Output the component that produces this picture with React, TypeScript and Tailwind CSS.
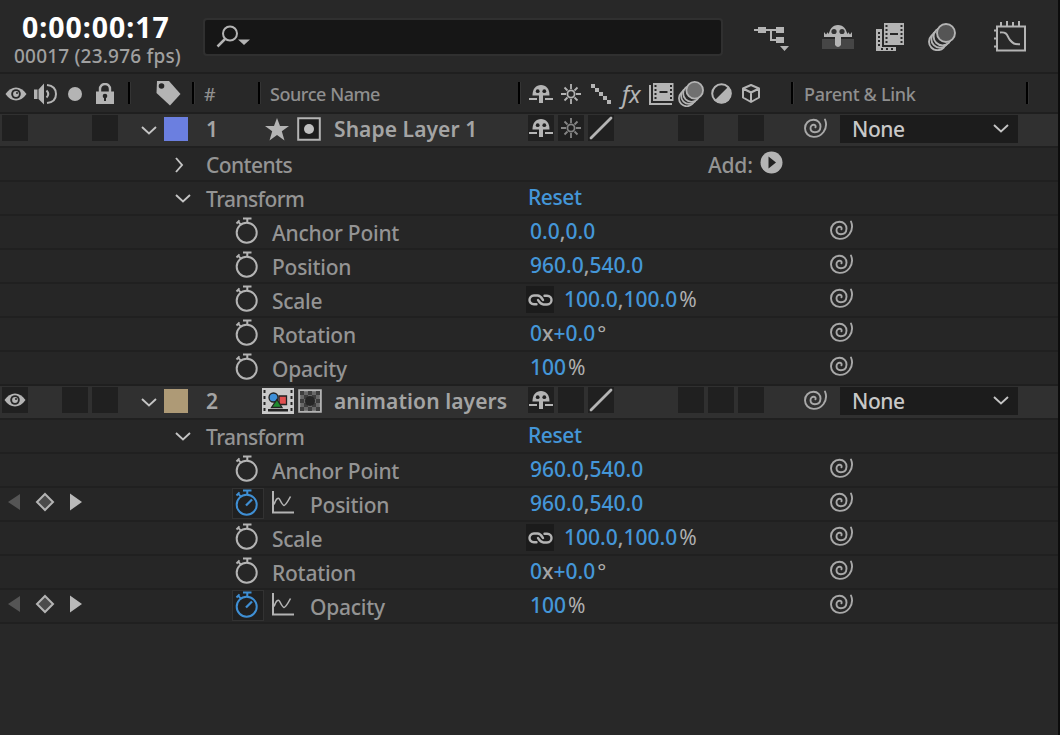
import type { ReactNode } from "react";

const GREY = "#b4b4b4";

function Eye() {
  return (
    <svg width="22" height="14" viewBox="0 0 22 14">
      <path d="M.5 7Q5 .5 11 .5T21.500 7Q17 13.500 11 13.500T.5 7Z" fill={GREY} />
      <circle cx="11" cy="7" r="4.800" fill="#262626" />
      <circle cx="11" cy="7" r="2.900" fill={GREY} />
      <circle cx="12" cy="6" r="1" fill="#262626" />
    </svg>
  );
}

function Speaker() {
  return (
    <svg width="24" height="24" viewBox="0 0 24 24" fill="none" stroke={GREY} strokeWidth="2">
      <path d="M0 7.500h3.500V17H0zM4.500 7.500L10 1.500v21L4.500 17z" fill={GREY} stroke="none" />
      <path d="M12.500 8.500Q16 12 12.500 15.500M13 3q9 1 9 9t-9 9" />
    </svg>
  );
}

function Lock() {
  return (
    <svg width="18" height="21" viewBox="0 0 18 21">
      <path d="M4 9V6a5 5 0 0 1 10 0v3" fill="none" stroke={GREY} strokeWidth="2.400" />
      <path d="M0 8.500h18V21H0z" fill={GREY} />
      <circle cx="9" cy="13" r="2.300" fill="#262626" />
      <path d="M8 13h2v5H8z" fill="#262626" />
    </svg>
  );
}

function Tag() {
  return (
    <svg width="25" height="25" viewBox="0 0 25 25">
      <path d="M1 0h12l11.500 13-10.500 11.500L.5 12z" fill={GREY} />
      <circle cx="5.500" cy="5" r="2.800" fill="#262626" />
    </svg>
  );
}

function Shy() {
  return (
    <svg width="24" height="20" viewBox="0 0 24 20" fill={GREY}>
      <path d="M3.500 11.500C3.500 4.500 7 1 12 1s8.500 3.500 8.500 10.500z" />
      <path d="M10 10h4v9h-4z" />
      <path d="M0 14h8v2H0zM16 14h8v2h-8z" />
      <circle cx="8.700" cy="7.200" r="1.900" fill="#202020" />
      <circle cx="15.300" cy="7.200" r="1.900" fill="#202020" />
    </svg>
  );
}

function Sun({ color = GREY }: { color?: string }) {
  return (
    <svg width="20" height="20" viewBox="0 0 20 20" fill="none" stroke={color} strokeWidth="1.800">
      <circle cx="10" cy="10" r="3.600" />
      <path d="M10 0v5M10 15v5M0 10h5M15 10h5M3.500 3.500l3 3M13.500 13.500l3 3M3.500 16.500l3-3M13.500 6.500l3-3" />
    </svg>
  );
}

function Dashes() {
  return (
    <svg width="20" height="20" viewBox="0 0 20 20" fill={GREY}>
      <path d="M0 0h4v4H0zM4 4h4v4H4zM8 8h4v4H8zM12 12h4v4h-4zM16 16h4v4h-4z" />
    </svg>
  );
}

function FilmFrame() {
  return (
    <svg width="25" height="22" viewBox="0 0 25 22">
      <path d="M1 2v19h22" fill="none" stroke={GREY} strokeWidth="2" />
      <path d="M4 0h20.500v18H4z" fill={GREY} />
      <path d="M5.500 2h2v2h-2zM5.500 6h2v2h-2zM5.500 10h2v2h-2zM5.500 14h2v2h-2zM21 2h2v2h-2zM21 6h2v2h-2zM21 10h2v2h-2zM21 14h2v2h-2zM10.500 8h8v2h-8z" fill="#262626" />
    </svg>
  );
}

function MotionBlur({ size = 26, fill = "#707070" }: { size?: number; fill?: string }) {
  return (
    <svg width={size} height={size} viewBox="0 0 28 28" stroke={GREY} strokeWidth="1.900" fill="#282828">
      <circle cx="9.500" cy="18.700" r="8.500" />
      <circle cx="12" cy="16" r="8.700" />
      <circle cx="14.500" cy="13.500" r="8.900" />
      <circle cx="18" cy="10" r="9" fill={fill} />
    </svg>
  );
}

function Adjustment() {
  return (
    <svg width="21" height="21" viewBox="0 0 21 21">
      <circle cx="10.500" cy="10.500" r="9.300" fill="none" stroke={GREY} strokeWidth="2" />
      <path d="M17.500 3.500a9.900 9.900 0 0 1-14 14z" fill={GREY} />
    </svg>
  );
}

function Cube() {
  return (
    <svg width="18" height="19" viewBox="0 0 18 19" fill="none" stroke={GREY} strokeWidth="2" strokeLinejoin="round">
      <path d="M9 1l8 3.500v9L9 18l-8-4.500v-9zM1 4.500l8 4 8-4M9 8.500V18" />
    </svg>
  );
}

function Whip() {
  return (
    <svg width="25" height="21" viewBox="0 0 25 21" fill="none" stroke="#a8a8a8" strokeWidth="1.900" strokeLinecap="round">
      <path d="M22 1.500C23.500 5 23.300 10 20.500 14C17.500 18 13.500 19 10.500 18.900C5.500 18.600 2 15 2 10.300C2 5.500 5.500 1.800 10.500 1.800C14.800 1.800 17.700 5 17.500 8.800C17.300 12.500 14.800 14.300 11.800 14.300C9 14 7.500 12.200 7.500 10.200C7.500 8 9 6.600 11 6.800C12.500 7 12.800 8 12.500 9.300" />
    </svg>
  );
}

function Stopwatch({ active }: { active?: boolean }) {
  const color = active ? "#3f8fd4" : GREY;
  return (
    <svg width="24" height="28" viewBox="0 0 24 28" fill="none" stroke={color} strokeWidth="2">
      <circle cx="11.700" cy="16.700" r="10" />
      <path d="M8 2.500h8.500M12.300 3v4" />
      <path d="M1.500 7.500l3-3.200M2.500 5.200l3.500 3.500" strokeWidth="1.900" />
      {active && <path d="M11 17.500l6-6" strokeWidth="2.300" />}
    </svg>
  );
}

function GraphIcon() {
  return (
    <svg width="22" height="23" viewBox="0 0 22 23" fill="none" stroke={GREY}>
      <path d="M1 0v21.500h21" strokeWidth="2" />
      <path d="M2 13.500Q5.500 4 8 9t4 5.500Q14 14 18.500 5.500" strokeWidth="1.600" />
    </svg>
  );
}

function Chevron({ right }: { right?: boolean }) {
  return right ? (
    <svg width="9" height="16" viewBox="0 0 9 16" fill="none" stroke="#c4c4c4" strokeWidth="1.900">
      <path d="M1 1l6 7-6 7" />
    </svg>
  ) : (
    <svg width="16" height="9" viewBox="0 0 16 9" fill="none" stroke="#c4c4c4" strokeWidth="1.900">
      <path d="M1 1l7 6.500L15 1" />
    </svg>
  );
}

function Link() {
  return (
    <svg width="25" height="12" viewBox="0 0 25 12" fill="none" stroke={GREY} strokeWidth="2.400" strokeLinecap="round">
      <path d="M8.500 10.200H6C3 10.200 1.500 8 1.500 6S3 1.500 6 1.500H9.500C12.500 1.500 13.500 3.500 15 6" />
      <path d="M16.500 1.800H19C22 1.800 23.500 4 23.500 6S22 10.500 19 10.500H15.500C12.500 10.500 11.500 8.500 10 6" />
    </svg>
  );
}

function CompIcon() {
  return (
    <svg width="32" height="26" viewBox="0 0 32 26">
      <path d="M0 0h32v26H0z" fill="#c9c9c9" />
      <path d="M1.500 2h2v3h-2zM1.500 8h2v3h-2zM1.500 14h2v3h-2zM1.500 20h2v3h-2zM28.500 2h2v3h-2zM28.500 8h2v3h-2zM28.500 14h2v3h-2zM28.500 20h2v3h-2zM6 21h20v2.500H6z" fill="#222" />
      <path d="M17 8h7.500v8.500H17z" fill="#e05050" stroke="#222" strokeWidth="1.300" />
      <circle cx="11.500" cy="9.500" r="4.500" fill="#3d8fd8" stroke="#222" strokeWidth="1.300" />
      <path d="M15 11.500l5 8H9.500z" fill="#1e8a2e" stroke="#222" strokeWidth="1.300" />
    </svg>
  );
}

function MatteIcon({ checker }: { checker?: boolean }) {
  return (
    <svg width="24" height="24" viewBox="0 0 24 24">
      <path d="M1.200 1.200h21.600v21.600H1.200z" fill={checker ? "#686868" : "#1d1d1d"} stroke={GREY} strokeWidth="2" />
      {checker && <path d="M2 2h4v4H2zM10 2h4v4h-4zM18 2h4v4h-4zM6 6h4v4H6zM14 6h4v4h-4zM2 10h4v4H2zM18 10h4v4h-4zM6 14h4v4H6zM14 14h4v4h-4zM2 18h4v4H2zM10 18h4v4h-4zM18 18h4v4h-4z" fill="#3e3e3e" />}
      <circle cx="12" cy="12" r="5" fill={checker ? "#262626" : "#c0c0c0"} />
    </svg>
  );
}

function Slash() {
  return (
    <svg width="24" height="24" viewBox="0 0 24 24">
      <path d="M2 22L22 2" stroke={GREY} strokeWidth="2.800" strokeLinecap="round" />
    </svg>
  );
}

function Divider() {
  return <div className="h-[22px] w-[3px] shrink-0 border-r border-[#343434] bg-black" />;
}

function Box({ on, children }: { on?: boolean; children?: ReactNode }) {
  return (
    <div className={`flex size-[26px] shrink-0 items-center justify-center ${on ? "bg-[#202020]" : ""}`}>
      {children}
    </div>
  );
}

function TopBar() {
  return (
    <header className="flex h-[74px] border-b-2 border-[#1f1f1f]">
      <div className="w-[203px] shrink-0 whitespace-nowrap">
        <div className="mt-[12px] ml-[22px] text-[28.500px] leading-[30px] font-bold tracking-[0.950px] text-white">0:00:00:17</div>
        <div className="mt-[3px] ml-[14px] text-[19px] leading-[22px] font-medium tracking-[0.200px] text-[#a0a0a0]">00017 (23.976 fps)</div>
      </div>
      <div className="mt-[18px] flex h-[38px] w-[520px] shrink-0 rounded-[4px] border-2 border-[#303030] bg-[#161616] pt-[5px] pl-[11px]">
        <svg width="36" height="25" viewBox="0 0 36 25">
          <circle cx="14" cy="8.500" r="7" fill="none" stroke={GREY} strokeWidth="2" />
          <path d="M9 14L1.500 21.500" stroke={GREY} strokeWidth="2.500" />
          <path d="M22 14.500h12l-6 5.500z" fill={GREY} />
        </svg>
      </div>
      <svg className="mt-[25px] ml-[31px] shrink-0" width="35" height="27" viewBox="0 0 35 27" fill={GREY}>
        <path d="M0 4h24v2H0zM16 5h2v11h-2zM16 14h8v2h-8zM4 2h8v6H4zM22 2h8v6h-8zM22 12h8v6h-8zM26 21h9l-4.500 5z" />
      </svg>
      <svg className="mt-[23px] ml-[33px] shrink-0" width="32" height="27" viewBox="0 0 32 27" fill={GREY}>
        <path d="M0 16h32v10H0z" fill="#464646" />
        <path d="M7 13C7 6 10.500 2 16 2s9 4 9 11z" />
        <path d="M2 14V9l2 2.500L6 9v2l2-2v3h16V9l2 2V9l2 2.500L30 9v5z" />
        <path d="M13 12h6v10q-3 4-6 0z" />
        <circle cx="12" cy="8.500" r="2.600" fill="#333" />
        <circle cx="20" cy="8.500" r="2.600" fill="#333" />
      </svg>
      <svg className="mt-[23px] ml-[22px] shrink-0" width="28" height="28" viewBox="0 0 28 28" fill={GREY}>
        <path d="M0 6h6v18h14v4H0z" />
        <path d="M8 0h20v22H8z" />
        <path d="M2 9h2v2H2zM2 13h2v2H2zM2 17h2v2H2zM2 21h2v2H2zM5 25h2v2H5zM10 25h2v2h-2zM15 25h2v2h-2zM9.500 2h2v2h-2zM9.500 6h2v2h-2zM9.500 10h2v2h-2zM9.500 14h2v2h-2zM9.500 18h2v2h-2zM24.500 2h2v2h-2zM24.500 6h2v2h-2zM24.500 10h2v2h-2zM24.500 14h2v2h-2zM24.500 18h2v2h-2zM14 10h8v2h-8z" fill="#282828" />
      </svg>
      <div className="mt-[23px] ml-[24px] shrink-0"><MotionBlur size={28} fill="#555" /></div>
      <svg className="mt-[21px] ml-[38px] shrink-0" width="33" height="31" viewBox="0 0 33 31" fill="none" stroke={GREY} strokeWidth="2">
        <path d="M3 5.500h28v24H3zM7 1v4M13 0v5M19 1v4M25 0v5M0 9.500h3M0 17.500h3M0 25.500h3M6 11.500c8-1 7 4 10 7.500s4 4.500 10 4.200" />
      </svg>
    </header>
  );
}

function ColumnHeader() {
  return (
    <div className="flex h-[38px] items-center text-[18px] font-medium tracking-[-0.450px] whitespace-nowrap text-[#8f8f8f]">
      <div className="flex w-[128px] shrink-0 items-center pt-px pl-[5px]">
        <Eye />
        <div className="ml-[7px]"><Speaker /></div>
        <div className="ml-[10px] size-[14px] rounded-full bg-[#b4b4b4]" />
        <div className="ml-[14px]"><Lock /></div>
      </div>
      <Divider />
      <div className="w-[61px] shrink-0 pt-px pl-[25px]"><Tag /></div>
      <Divider />
      <div className="w-[63px] shrink-0 pt-[2px] pl-[9px]">#</div>
      <Divider />
      <div className="w-[257px] shrink-0 pt-[2px] pl-[9px]">Source Name</div>
      <Divider />
      <div className="flex w-[270px] shrink-0 pt-px pl-[5px] [&>*]:flex [&>*]:w-[30px] [&>*]:shrink-0 [&>*]:items-center [&>*]:justify-center">
        <div><Shy /></div>
        <div><Sun /></div>
        <div><Dashes /></div>
        <div className="text-[24px] leading-6 font-normal text-[#b4b4b4] italic">fx</div>
        <div><FilmFrame /></div>
        <div><MotionBlur /></div>
        <div><Adjustment /></div>
        <div><Cube /></div>
      </div>
      <Divider />
      <div className="w-[232px] shrink-0 pt-[2px] pl-[10px] tracking-[-0.300px]">Parent & Link</div>
      <Divider />
    </div>
  );
}

type Layer = {
  index: number;
  name: string;
  color: string;
  av: ReactNode[];
  icons: ReactNode;
  switches: ReactNode[];
};

// null leaves the switch slot empty, false draws an unset switch
const layers: Layer[] = [
  {
    index: 1,
    name: "Shape Layer 1",
    color: "bg-[#6b7fe0]",
    av: [false, null, null, false],
    icons: (
      <>
        <svg className="ml-[3px]" width="24" height="23" viewBox="0 0 24 23" fill={GREY}>
          <path d="M12 0l3 8h9l-7.200 5.300L19.500 22.500 12 17l-7.500 5.500 2.700-9.200L0 8h9z" />
        </svg>
        <div className="ml-[8px]"><MatteIcon /></div>
      </>
    ),
    switches: [<Shy />, <Sun color="#858585" />, <Slash />, null, null, false, null, false],
  },
  {
    index: 2,
    name: "animation layers",
    color: "bg-[#ae9a76]",
    av: [<Eye />, null, false, false],
    icons: (
      <>
        <CompIcon />
        <div className="ml-[4px]"><MatteIcon checker /></div>
      </>
    ),
    switches: [<Shy />, false, <Slash />, null, null, false, false, false],
  },
];

function LayerRow({ layer }: { layer: Layer }) {
  return (
    <div className="flex h-[34px] border-t-2 border-[#1f1f1f] bg-[#303030] pt-px text-[21px] leading-[29px] font-semibold whitespace-nowrap text-[#a4a4a4]">
      <div className="flex w-[140px] shrink-0 gap-[4px] pl-[2px]">
        {layer.av.map((s, i) => (
          <Box key={i} on={s !== null}>{s}</Box>
        ))}
      </div>
      <div className="w-[24px] shrink-0 pt-[11px] pl-px"><Chevron /></div>
      <div className={`mt-[2px] size-[24px] shrink-0 ${layer.color}`} />
      <div className="w-[74px] shrink-0 pl-[18px]">{layer.index}</div>
      <div className="mt-px flex h-[26px] w-[72px] shrink-0 items-center">{layer.icons}</div>
      <div className="w-[194px] shrink-0 tracking-[0.080px]">{layer.name}</div>
      <div className="flex w-[275px] shrink-0 gap-[4px]">
        {layer.switches.map((s, i) => (
          <Box key={i} on={s !== null}>{s}</Box>
        ))}
      </div>
      <div className="mt-[3px] w-[37px] shrink-0"><Whip /></div>
      <div className="flex h-[28px] w-[178px] shrink-0 justify-between bg-[#1c1c1c] pr-[9px] pl-[12px]">
        <span className="font-medium tracking-[-0.400px] text-[#c8c8c8]">None</span>
        <div className="mt-[9px]"><Chevron /></div>
      </div>
    </div>
  );
}

function GroupRow({ name, open, children }: { name: string; open?: boolean; children?: ReactNode }) {
  return (
    <div className="flex h-[34px] border-t-2 border-[#202020] bg-[#262626] text-[21px] leading-[34px] font-medium tracking-[-0.600px] whitespace-nowrap text-[#949494]">
      <div className="w-[206px] shrink-0 pl-[175px]">
        <div className={open ? "mt-[12px]" : "mt-[9px]"}><Chevron right={!open} /></div>
      </div>
      <div className="w-[322px] shrink-0">{name}</div>
      {children}
    </div>
  );
}

type PropertyProps = {
  name: string;
  value: string[];
  separator?: string;
  suffix?: string;
  linked?: boolean;
  keyed?: boolean;
};

function PropertyRow({ name, value, separator = ",", suffix, linked, keyed }: PropertyProps) {
  return (
    <div className="flex h-[34px] border-t-2 border-[#202020] bg-[#262626] text-[21px] leading-[34px] font-medium whitespace-nowrap">
      <div className="w-[232px] shrink-0">
        {keyed && (
          <svg className="mt-[4px] ml-[8px]" width="76" height="20" viewBox="0 0 76 20">
            <path d="M12 2v16L0 10z" fill="#555" />
            <path d="M37 2l8 8-8 8-8-8z" fill="#4a4a4a" stroke={GREY} strokeWidth="2" />
            <path d="M62 1.500v17L74 10z" fill="#b9b9b9" />
          </svg>
        )}
      </div>
      <div className={`h-[31px] w-[32px] shrink-0 border pl-[2px] ${keyed ? "border-[#323232] bg-[#202020]" : "border-transparent"}`}>
        <div className="-mt-px"><Stopwatch active={keyed} /></div>
      </div>
      <div className="flex w-[262px] shrink-0 tracking-[-0.250px] text-[#949494]">
        {keyed && <div className="mt-[3px] w-[38px] shrink-0 pl-[8px]"><GraphIcon /></div>}
        <span className="pl-[8px]">{name}</span>
      </div>
      <div className="-mt-[2px] flex w-[303px] shrink-0 text-[#4496d8]">
        {linked ? (
          <div className="mt-[4px] mr-[10px] flex h-[27px] w-[28px] items-center justify-center bg-[#1b1b1b]"><Link /></div>
        ) : (
          <div className="w-[4px]" />
        )}
        {value.map((v, i) => (
          <span key={i}>
            {i > 0 && <span className="text-[#a4a4a4]">{separator}</span>}
            {v}
          </span>
        ))}
        {suffix && <span className="pl-[2px] font-normal text-[#b0b0b0]">{suffix}</span>}
      </div>
      <div className="mt-[4px] shrink-0"><Whip /></div>
    </div>
  );
}

function Transform({ anchor, keyed }: { anchor: string[]; keyed?: boolean }) {
  return (
    <>
      <GroupRow name="Transform" open>
        <button className="-mt-[2px] h-[34px] tracking-[-0.400px] text-[#4496d8]">Reset</button>
      </GroupRow>
      <PropertyRow name="Anchor Point" value={anchor} />
      <PropertyRow name="Position" value={["960.0", "540.0"]} keyed={keyed} />
      <PropertyRow name="Scale" value={["100.0", "100.0"]} suffix="%" linked />
      <PropertyRow name="Rotation" value={["0", "+0.0"]} separator="x" suffix="°" />
      <PropertyRow name="Opacity" value={["100"]} suffix="%" keyed={keyed} />
    </>
  );
}

export default function App() {
  return (
    <div className="flex h-[735px] w-[1060px] flex-col overflow-hidden border-r-2 border-[#0c0c0c] bg-[#282828] font-['Noto_Sans',sans-serif]">
      <TopBar />
      <ColumnHeader />
      <LayerRow layer={layers[0]} />
      <GroupRow name="Contents">
        <div className="ml-[180px] tracking-[-0.200px]">Add:</div>
        <svg className="mt-[3px] ml-[7px]" width="23" height="23" viewBox="0 0 23 23">
          <circle cx="11.500" cy="11.500" r="11" fill={GREY} />
          <path d="M8.500 5.500v12l7.500-6z" fill="#222" />
        </svg>
      </GroupRow>
      <Transform anchor={["0.0", "0.0"]} />
      <LayerRow layer={layers[1]} />
      <Transform anchor={["960.0", "540.0"]} keyed />
      <div className="border-t-2 border-[#202020]" />
    </div>
  );
}
